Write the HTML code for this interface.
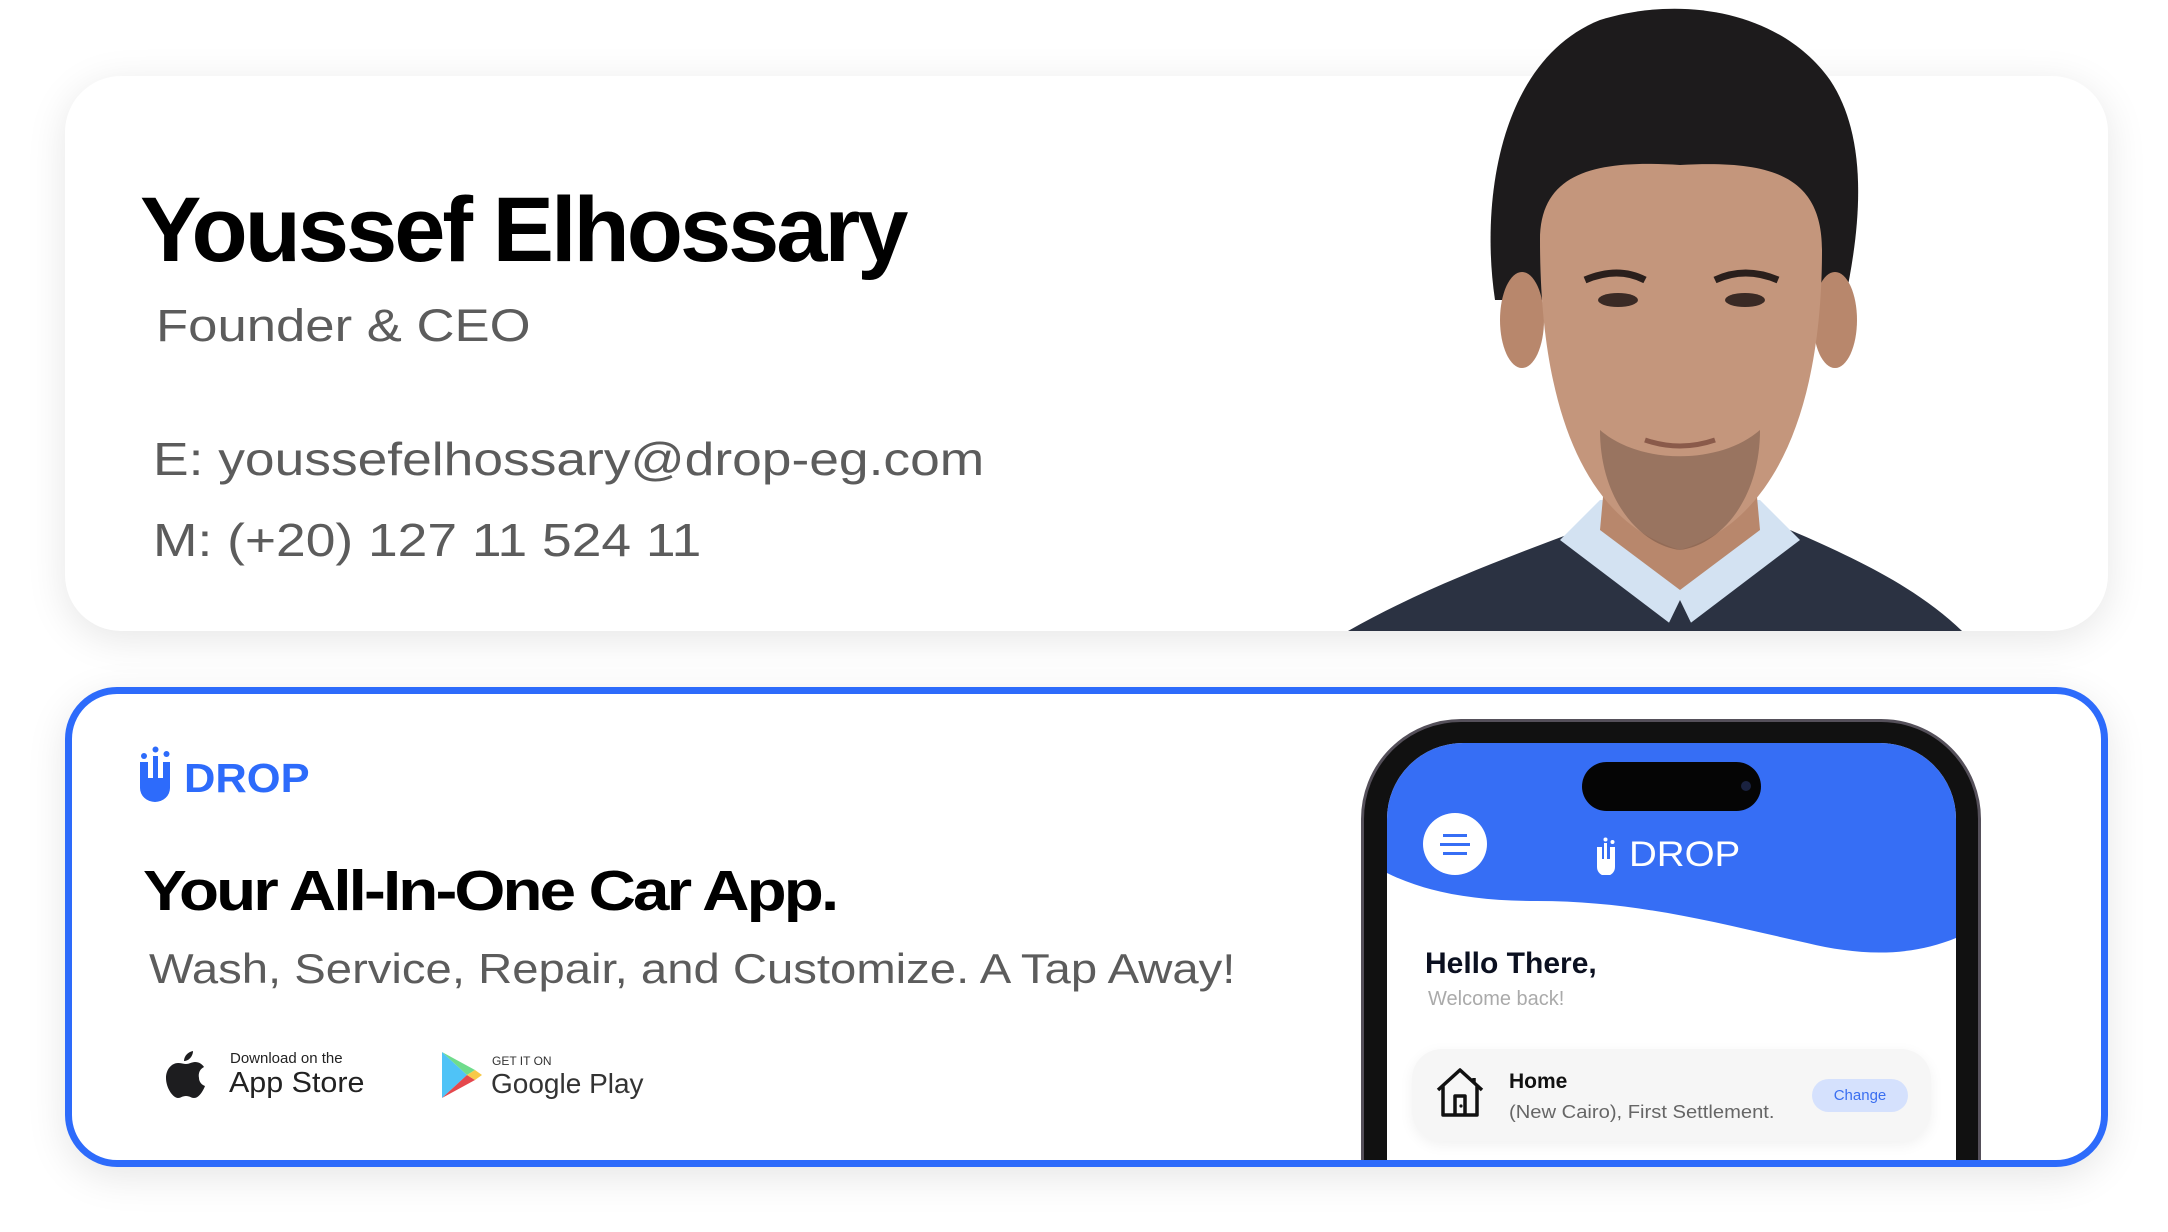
<!DOCTYPE html>
<html><head><meta charset="utf-8"><style>
html,body{margin:0;padding:0;}
body{width:2168px;height:1232px;position:relative;overflow:hidden;background:#fff;font-family:"Liberation Sans",sans-serif;}
.abs{position:absolute;white-space:nowrap;}
.sx{transform-origin:0 0;}
.card1{position:absolute;left:65px;top:76px;width:2043px;height:555px;border-radius:56px;background:#fff;box-shadow:0 8px 40px rgba(0,0,0,0.10);}
.card2{position:absolute;left:65px;top:687px;width:2029px;height:466px;border:7px solid #2d6bfb;border-radius:52px;box-shadow:0 10px 40px rgba(0,0,0,0.10);}
.card2bg{position:absolute;left:65px;top:687px;width:2043px;height:480px;border-radius:52px;background:#fff;}
</style></head><body>
<div class="card1"></div>
<svg class="abs" style="left:0;top:0" width="2168" height="640" viewBox="0 0 2168 640">
  <defs><clipPath id="c1"><rect x="0" y="0" width="2168" height="631"/></clipPath></defs>
  <g clip-path="url(#c1)">
    <path d="M1348 631 C1420 590 1500 560 1580 530 L1790 530 C1860 560 1920 590 1962 631 Z" fill="#2b3242"/>
    <path d="M1560 540 L1680 631 L1800 540 L1760 500 L1600 500 Z" fill="#d3e2f2"/>
    <path d="M1665 631 L1680 600 L1695 631 Z" fill="#2b3242"/>
    <path d="M1610 420 L1750 420 L1760 530 L1680 590 L1600 530 Z" fill="#b8876c"/>
    <path d="M1495 300 C1480 200 1500 60 1600 20 C1680 -5 1780 10 1830 80 C1870 140 1860 230 1845 300 Z" fill="#1d1b1c"/>
    <ellipse cx="1522" cy="320" rx="22" ry="48" fill="#b8876c"/>
    <ellipse cx="1835" cy="320" rx="22" ry="48" fill="#b8876c"/>
    <path d="M1540 240 C1540 170 1600 160 1680 165 C1770 160 1822 175 1822 250 C1822 400 1780 520 1680 550 C1580 520 1540 400 1540 240 Z" fill="#c4967c"/>
    <path d="M1600 430 C1640 465 1720 465 1760 430 C1760 500 1720 545 1680 550 C1640 545 1600 500 1600 430 Z" fill="#5a4238" opacity="0.4"/>
    <ellipse cx="1618" cy="300" rx="20" ry="7" fill="#3a2a25"/>
    <ellipse cx="1745" cy="300" rx="20" ry="7" fill="#3a2a25"/>
    <path d="M1585 280 Q1618 266 1645 280" stroke="#2a1f1c" stroke-width="7" fill="none"/>
    <path d="M1715 280 Q1745 266 1778 280" stroke="#2a1f1c" stroke-width="7" fill="none"/>
    <path d="M1645 440 Q1680 452 1715 440" stroke="#8a5a4a" stroke-width="5" fill="none"/>
  </g>
</svg>
<div class="abs" style="left:140px;top:175px;font-size:92px;font-weight:bold;letter-spacing:-3px;color:#000;line-height:110px;">Youssef Elhossary</div>
<div class="abs sx" style="left:156px;top:296px;font-size:45px;color:#5c5c5c;line-height:60px;transform:scaleX(1.17);">Founder &amp; CEO</div>
<div class="abs sx" style="left:153px;top:429px;font-size:46px;color:#5c5c5c;line-height:60px;transform:scaleX(1.16);">E: youssefelhossary@drop-eg.com</div>
<div class="abs sx" style="left:153px;top:510px;font-size:46px;color:#5c5c5c;line-height:60px;transform:scaleX(1.16);">M: (+20) 127 11 524 11</div>

<div class="card2bg"></div>
<div class="abs" style="left:0;top:0;width:2168px;height:1160px;overflow:hidden;">
  <div class="abs" style="left:1361px;top:719px;width:620px;height:520px;border-radius:100px 100px 0 0;background:#111;border:3px solid #55505a;box-sizing:border-box;"></div>
  <div class="abs" style="left:1387px;top:743px;width:569px;height:500px;border-radius:76px 76px 0 0;background:#fff;overflow:hidden;">
    <svg class="abs" style="left:0;top:0" width="569" height="220" viewBox="0 0 569 220">
      <path d="M0 0 H569 V195 C520 215 470 212 420 200 C330 180 250 158 150 158 C90 158 40 150 0 130 Z" fill="#366ef5"/>
    </svg>
    <div class="abs" style="left:195px;top:19px;width:179px;height:49px;border-radius:25px;background:#050505;"></div>
    <div class="abs" style="left:354px;top:38px;width:10px;height:10px;border-radius:5px;background:#1a2240;"></div>
    <div class="abs" style="left:36px;top:70px;width:64px;height:62px;border-radius:50%;background:#fff;"></div>
    <div class="abs" style="left:56px;top:91px;width:24px;height:3px;background:#366ef5;"></div>
    <div class="abs" style="left:53px;top:100px;width:30px;height:3px;background:#366ef5;"></div>
    <div class="abs" style="left:56px;top:109px;width:24px;height:3px;background:#366ef5;"></div>
    <svg class="abs" style="left:208px;top:94px" width="22" height="38" viewBox="0 0 22 38">
      <path d="M2 10 V30 A9 9 0 0 0 20 30 V10 H15 V22 H12 V6 H9 V22 H7 V10 Z" fill="#fff"/>
      <circle cx="10.5" cy="2.5" r="2" fill="#fff"/><circle cx="17.5" cy="5" r="2" fill="#fff"/>
    </svg>
    <div class="abs sx" style="left:242px;top:92px;font-size:35px;color:#fff;line-height:40px;transform:scaleX(1.1);">DROP</div>
    <div class="abs" style="left:38px;top:203px;font-size:30px;font-weight:bold;color:#0b1020;line-height:36px;">Hello There,</div>
    <div class="abs" style="left:41px;top:243px;font-size:20px;color:#aaa;line-height:26px;">Welcome back!</div>
    <div class="abs" style="left:25px;top:306px;width:519px;height:92px;border-radius:30px;background:#f6f6f6;box-shadow:0 4px 14px rgba(0,0,0,0.06);"></div>
    <svg class="abs" style="left:48px;top:325px" width="50" height="50" viewBox="0 0 50 50">
      <path d="M3 22 L25 2 L47 22 M8 18 V47 H42 V18 M39 10 V15 M20 47 V28 H30 V47" fill="none" stroke="#111" stroke-width="3.5" stroke-linejoin="round"/>
      <circle cx="26" cy="38" r="1.6" fill="#111"/>
    </svg>
    <div class="abs" style="left:122px;top:326px;font-size:21px;font-weight:bold;color:#111;line-height:26px;">Home</div>
    <div class="abs sx" style="left:122px;top:357px;font-size:18px;color:#666;line-height:24px;transform:scaleX(1.12);">(New Cairo), First Settlement.</div>
    <div class="abs" style="left:425px;top:336px;width:96px;height:33px;border-radius:17px;background:#d5e1fd;color:#3a6ef0;font-size:15px;line-height:33px;text-align:center;">Change</div>
  </div>
</div>
<div class="card2"></div>

<svg class="abs" style="left:139px;top:746px" width="32" height="56" viewBox="0 0 32 56">
  <path d="M1 16 V42 A15 14 0 0 0 31 42 V16 H24 V32 H19 V10 H14 V32 H9 V16 Z" fill="#2d6bfb"/>
  <circle cx="16.5" cy="3.5" r="3" fill="#2d6bfb"/><circle cx="27.5" cy="8" r="3" fill="#2d6bfb"/><circle cx="5" cy="10" r="3" fill="#2d6bfb"/>
</svg>
<div class="abs sx" style="left:184px;top:755px;font-size:41px;font-weight:bold;color:#2d6bfb;line-height:46px;transform:scaleX(1.06);">DROP</div>
<div class="abs sx" style="left:143px;top:858px;font-size:57px;font-weight:bold;color:#000;letter-spacing:-2.5px;line-height:66px;transform:scaleX(1.15);">Your All-In-One Car App.</div>
<div class="abs sx" style="left:149px;top:944px;font-size:42px;color:#5c5c5c;line-height:50px;transform:scaleX(1.125);">Wash, Service, Repair, and Customize. A Tap Away!</div>

<svg class="abs" style="left:166px;top:1051px" width="40" height="47" viewBox="0 0 40 47">
  <path d="M27 0 C27 5 23 10 18 10 C18 5 22 1 27 0 Z" fill="#1d1d1f"/>
  <path d="M20 13 C23 13 26 11 29 11 C33 11 36 13 38 16 C34 18 32 22 33 27 C33 31 36 34 39 35 C37 40 33 47 28 47 C25 47 24 45 20 45 C16 45 15 47 12 47 C7 47 0 37 0 27 C0 18 6 12 12 12 C15 12 18 13 20 13 Z" fill="#1d1d1f"/>
</svg>
<div class="abs" style="left:230px;top:1050px;font-size:15px;color:#222;line-height:18px;">Download on the</div>
<div class="abs sx" style="left:229px;top:1066px;font-size:29px;color:#222;line-height:34px;transform:scaleX(1.05);">App Store</div>

<svg class="abs" style="left:441px;top:1051px" width="42" height="48" viewBox="0 0 42 48">
  <path d="M1 1 L26 24 L1 47 Z" fill="#4fc3f7"/>
  <path d="M1 1 L34 19 L26 24 Z" fill="#6fdc8c"/>
  <path d="M1 47 L34 29 L26 24 Z" fill="#e5484d"/>
  <path d="M34 19 L41 24 L34 29 L26 24 Z" fill="#f7c948"/>
</svg>
<div class="abs" style="left:492px;top:1054px;font-size:12px;color:#333;line-height:14px;">GET IT ON</div>
<div class="abs" style="left:491px;top:1067px;font-size:28px;color:#333;line-height:34px;">Google Play</div>
</body></html>
